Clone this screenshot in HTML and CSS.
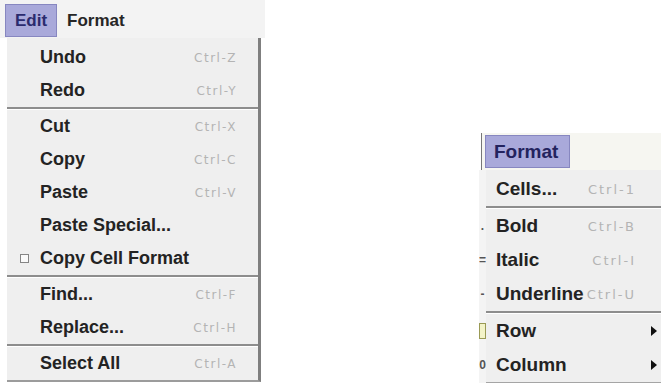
FILE: index.html
```html
<!DOCTYPE html>
<html lang="en">
<head>
  <meta charset="UTF-8" />
  <meta name="viewport" content="width=device-width, initial-scale=1.0"/>
  <link rel="stylesheet" href="styles.css">
</head>
<body>
  <div class="page">

    <!-- Edit menu -->
    <section class="shot shot-edit">
      <div class="menubar">
        <span class="menu-title active">Edit</span>
        <span class="menu-title">Format</span>
      </div>
      <ul class="menu menu-edit">
        <li class="item"><span class="label">Undo</span><span class="key">Ctrl-Z</span></li>
        <li class="item"><span class="label">Redo</span><span class="key">Ctrl-Y</span></li>
        <li class="sep"></li>
        <li class="item"><span class="label">Cut</span><span class="key">Ctrl-X</span></li>
        <li class="item"><span class="label">Copy</span><span class="key">Ctrl-C</span></li>
        <li class="item"><span class="label">Paste</span><span class="key">Ctrl-V</span></li>
        <li class="item"><span class="label">Paste Special...</span></li>
        <li class="item"><span class="check"></span><span class="label">Copy Cell Format</span></li>
        <li class="sep"></li>
        <li class="item"><span class="label">Find...</span><span class="key">Ctrl-F</span></li>
        <li class="item"><span class="label">Replace...</span><span class="key">Ctrl-H</span></li>
        <li class="sep"></li>
        <li class="item"><span class="label">Select All</span><span class="key">Ctrl-A</span></li>
      </ul>
    </section>

    <!-- Format menu -->
    <section class="shot shot-format">
      <div class="menubar menubar-format">
        <span class="menu-title active">Format</span>
      </div>
      <div class="format-body">
        <div class="sheet-edge">
          <span class="mark"></span>
          <span class="mark mark-sep"></span>
          <span class="mark">.</span>
          <span class="mark">=</span>
          <span class="mark">-</span>
          <span class="mark mark-sep"></span>
          <span class="mark"><i class="cell"></i></span>
          <span class="mark">0</span>
        </div>
        <ul class="menu menu-format">
          <li class="item"><span class="label">Cells...</span><span class="key">Ctrl-1</span></li>
          <li class="sep"></li>
          <li class="item"><span class="label">Bold</span><span class="key">Ctrl-B</span></li>
          <li class="item"><span class="label">Italic</span><span class="key">Ctrl-I</span></li>
          <li class="item"><span class="label">Underline</span><span class="key">Ctrl-U</span></li>
          <li class="sep"></li>
          <li class="item"><span class="label">Row</span><span class="arrow"></span></li>
          <li class="item"><span class="label">Column</span><span class="arrow"></span></li>
        </ul>
      </div>
    </section>

  </div>
</body>
</html>
```

FILE: styles.css
```css
* {
  margin: 0;
  padding: 0;
  box-sizing: border-box;
}

body {
  background: #fff;
  font-family: "Liberation Sans", Arial, sans-serif;
  color: #232323;
}

.page {
  display: flex;
  align-items: flex-start;
}

/* ---- Edit shot ---- */

.shot-edit {
  width: 265px;
}

.menubar {
  height: 38px;
  padding: 4px 0 0 5px;
  display: flex;
  align-items: flex-start;
  background: #f3f3f3;
}

.menu-title {
  height: 33px;
  display: flex;
  align-items: center;
  font-size: 17px;
  font-weight: bold;
  color: #262626;
}

.menu-title.active {
  width: 52px;
  padding-left: 9px;
  margin-right: 10px;
  background: #a9a9da;
  border: 1px solid #8787c0;
  color: #2b2b6e;
}

.menu {
  list-style: none;
  background: #efefef;
}

.menu-edit {
  width: 254px;
  margin-left: 7px;
  padding-top: 3px;
  border-right: 3px solid #7f7f7f;
  border-bottom: 2px solid #9c9c9c;
}

.item {
  height: 33px;
  display: flex;
  align-items: center;
  padding: 0 21px 0 33px;
}

.label {
  font-size: 18px;
  font-weight: bold;
  white-space: nowrap;
  margin-right: 3px;
}

.key {
  margin-left: auto;
  font-family: "DejaVu Sans", sans-serif;
  font-size: 12px;
  letter-spacing: 1.5px;
  color: #b4b4b4;
  white-space: nowrap;
}

.sep {
  height: 3px;
  border-top: 2px solid #8d8d8d;
  background: #fff;
}

.check {
  width: 9px;
  height: 9px;
  margin-left: -20px;
  margin-right: 11px;
  border: 1px solid #858585;
  background: #fafafa;
}

/* ---- Format shot ---- */

.shot-format {
  width: 182px;
  margin: 133px 0 0 214px;
}

.menubar-format {
  height: 37px;
  padding: 2px 0 0 3px;
  margin-left: 2px;
  border-left: 1px solid #777;
  background: #f6f6f1;
}

.menubar-format .menu-title.active {
  width: 85px;
  padding-left: 8px;
  margin-right: 0;
  font-size: 19px;
  color: #23235e;
}

.format-body {
  display: flex;
}

.sheet-edge {
  width: 8px;
  padding-top: 2px;
  display: flex;
  flex-direction: column;
  background: #f4f4f4;
}

.mark {
  height: 34px;
  display: flex;
  align-items: center;
  justify-content: center;
  font-size: 12px;
  font-weight: bold;
  color: #555;
}

.mark-sep {
  height: 3px;
}

.cell {
  width: 7px;
  height: 16px;
  background: #f3f3c8;
  border: 1px solid #9a9a55;
}

.menu-format {
  flex: 1;
  padding-top: 2px;
  border-bottom: 1px solid #a5a5a5;
}

.menu-format .item {
  height: 34px;
  padding: 0 31px 0 10px;
}

.menu-format .label {
  font-size: 19px;
}

.menu-format .key {
  font-size: 13px;
  letter-spacing: 2px;
}

.arrow {
  margin-left: auto;
  margin-right: -21px;
  width: 0;
  height: 0;
  border-top: 5px solid transparent;
  border-bottom: 5px solid transparent;
  border-left: 6px solid #111;
}
```
